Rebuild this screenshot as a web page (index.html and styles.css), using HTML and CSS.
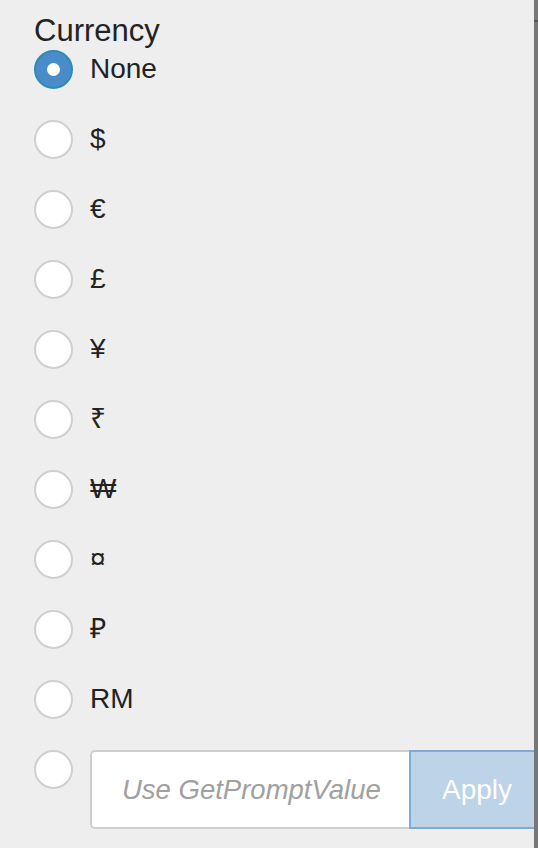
FILE: index.html
```html
<!DOCTYPE html>
<html>
<head>
<meta charset="utf-8">
<link rel="stylesheet" href="styles.css">
</head>
<body>
<div class="page">
  <div class="content">
    <div class="title">Currency</div>
    <div class="options">
      <label class="opt"><span class="radio checked"></span><span class="lbl">None</span></label>
      <label class="opt"><span class="radio"></span><span class="lbl">$</span></label>
      <label class="opt"><span class="radio"></span><span class="lbl">€</span></label>
      <label class="opt"><span class="radio"></span><span class="lbl">£</span></label>
      <label class="opt"><span class="radio"></span><span class="lbl">¥</span></label>
      <label class="opt"><span class="radio"></span><span class="lbl">₹</span></label>
      <label class="opt"><span class="radio"></span><span class="lbl">₩</span></label>
      <label class="opt"><span class="radio"></span><span class="lbl">¤</span></label>
      <label class="opt"><span class="radio"></span><span class="lbl">₽</span></label>
      <label class="opt"><span class="radio"></span><span class="lbl">RM</span></label>
      <div class="opt custom">
        <span class="radio"></span>
        <div class="group">
          <input class="field" type="text" placeholder="Use GetPromptValue">
          <button class="apply">Apply</button>
        </div>
      </div>
    </div>
  </div>
  <div class="scrollbar"><div class="sb-top"></div><div class="sb-line"></div><div class="sb-rest"></div></div>
</div>
</body>
</html>
```
FILE: styles.css
```css
html, body {
  margin: 0;
  padding: 0;
  background: #eeeeee;
}
body {
  font-family: "Liberation Sans", Arial, sans-serif;
  color: #222;
}
.page {
  display: flex;
  width: 538px;
  height: 848px;
  overflow: hidden;
}
.content {
  width: 534px;
  overflow: hidden;
  padding-left: 34px;
  box-sizing: border-box;
  padding-top: 12px;
}
.title {
  font-size: 31px;
  line-height: 38px;
  height: 38px;
}
.options {
  display: flex;
  flex-direction: column;
  gap: 32px;
}
.opt {
  display: flex;
  align-items: center;
  gap: 17px;
  height: 38px;
}
.radio {
  flex: none;
  width: 39px;
  height: 39px;
  box-sizing: border-box;
  border-radius: 50%;
  background: #fff;
  border: 2px solid #cfcfcf;
  display: flex;
  align-items: center;
  justify-content: center;
}
.radio.checked {
  background: #4a8bca;
  border-color: #2e8cb2;
}
.radio.checked::after {
  content: "";
  width: 13px;
  height: 13px;
  border-radius: 50%;
  background: #fff;
}
.lbl {
  font-size: 28px;
  line-height: 38px;
}
.custom {
  align-items: flex-start;
  height: 79px;
}
.group {
  display: flex;
  height: 79px;
  flex: none;
}
.field {
  width: 319px;
  height: 79px;
  box-sizing: border-box;
  border: 2px solid #cfcfcf;
  border-right: none;
  border-radius: 5px 0 0 5px;
  background: #fff;
  padding: 0 0 0 30px;
  font-family: "Liberation Sans", Arial, sans-serif;
  font-size: 27.5px;
  outline: none;
  margin: 0;
}
.field::placeholder {
  color: #a0a0a0;
  font-style: italic;
}
.apply {
  height: 79px;
  box-sizing: border-box;
  border: 2px solid #80aad4;
  background: #bdd3e7;
  color: #fff;
  font-family: "Liberation Sans", Arial, sans-serif;
  font-size: 28px;
  padding: 0 31px;
  margin: 0;
  flex: none;
}
.scrollbar {
  width: 4px;
  flex: none;
  display: flex;
  flex-direction: column;
  background: #777;
}
.sb-top { height: 20px; }
.sb-line { height: 2px; background: #555; }
.sb-rest { flex: 1; }
```
